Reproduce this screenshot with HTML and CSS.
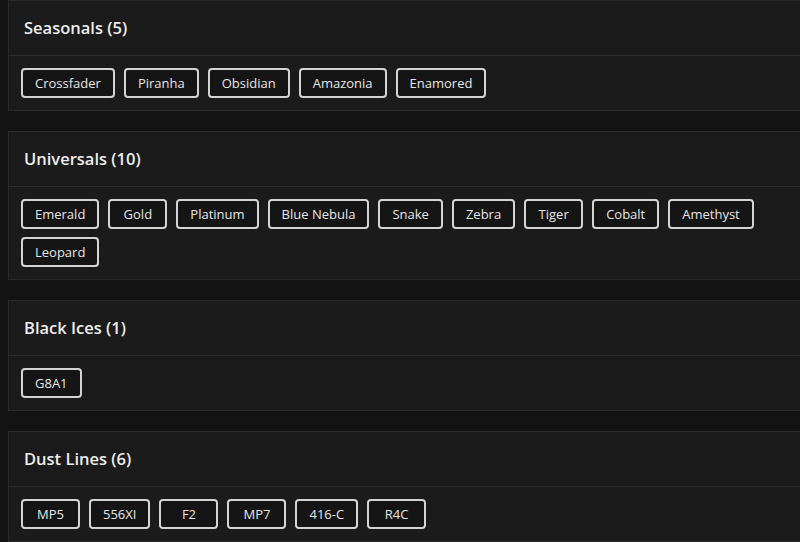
FILE: index.html
```html
<!DOCTYPE html>
<html lang="en">
<head>
  <meta charset="UTF-8" />
  <meta name="viewport" content="width=device-width, initial-scale=1.0"/>
  <title>Skins</title>
  <link rel="stylesheet" href="styles.css">
</head>
<body>
  <div class="page">
    <!-- Seasonals -->
    <div class="card">
      <div class="card-header">Seasonals (5)</div>
      <div class="card-body">
        <span class="chip">Crossfader</span>
        <span class="chip">Piranha</span>
        <span class="chip">Obsidian</span>
        <span class="chip">Amazonia</span>
        <span class="chip">Enamored</span>
      </div>
    </div>

    <!-- Universals -->
    <div class="card">
      <div class="card-header">Universals (10)</div>
      <div class="card-body">
        <span class="chip">Emerald</span>
        <span class="chip">Gold</span>
        <span class="chip">Platinum</span>
        <span class="chip">Blue Nebula</span>
        <span class="chip">Snake</span>
        <span class="chip">Zebra</span>
        <span class="chip">Tiger</span>
        <span class="chip">Cobalt</span>
        <span class="chip">Amethyst</span>
        <span class="chip">Leopard</span>
      </div>
    </div>

    <!-- Black Ices -->
    <div class="card">
      <div class="card-header">Black Ices (1)</div>
      <div class="card-body">
        <span class="chip">G8A1</span>
      </div>
    </div>

    <!-- Dust Lines -->
    <div class="card">
      <div class="card-header">Dust Lines (6)</div>
      <div class="card-body">
        <span class="chip">MP5</span>
        <span class="chip">556XI</span>
        <span class="chip">F2</span>
        <span class="chip">MP7</span>
        <span class="chip">416-C</span>
        <span class="chip">R4C</span>
      </div>
    </div>
  </div>
</body>
</html>
```

FILE: styles.css
```css
* {
  box-sizing: border-box;
}

html, body {
  margin: 0;
  padding: 0;
  background-color: #131313;
  font-family: "Open Sans", Arial, sans-serif;
  color: #e8e8e8;
  overflow: hidden;
}

.page {
  width: 830px;
  padding-left: 8px;
}

.card {
  background-color: #1b1b1b;
  border: 1px solid #2b2b2b;
  margin-bottom: 20px;
}

.card-header {
  height: 55px;
  display: flex;
  align-items: center;
  padding-left: 15px;
  padding-bottom: 1px;
  font-size: 16.5px;
  font-weight: 600;
  color: #ededed;
  border-bottom: 1px solid #2e2e2e;
}

.card-body {
  display: flex;
  flex-wrap: wrap;
  gap: 8px 9px;
  padding: 12px;
}

.chip {
  height: 30px;
  min-width: 59px;
  display: flex;
  align-items: center;
  justify-content: center;
  padding: 0 12px;
  border: 2px solid #d4d4d4;
  border-radius: 4px;
  font-size: 13px;
  color: #e6e6e6;
  background-color: #151515;
}
```
